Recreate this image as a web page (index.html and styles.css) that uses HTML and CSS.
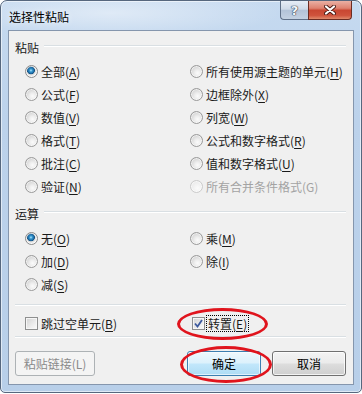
FILE: index.html
```html
<!DOCTYPE html>
<html lang="zh-CN">
<head>
<meta charset="utf-8">
<title>选择性粘贴</title>
<link rel="stylesheet" href="styles.css">
</head>
<body>
<div class="window">
  <div class="titlebar">
    <span class="title">选择性粘贴</span>
    <div class="caption-btns">
      <div class="cbtn help">?</div>
      <div class="cbtn close">
        <svg width="12" height="10" viewBox="0 0 12 10"><path d="M2 1.5 L10 8.5 M10 1.5 L2 8.5" stroke="#4a1a14" stroke-width="4" stroke-linecap="round"/><path d="M2 1.5 L10 8.5 M10 1.5 L2 8.5" stroke="#ffffff" stroke-width="2.2" stroke-linecap="round"/></svg>
      </div>
    </div>
  </div>
  <div class="client">
    <div class="group-head"><span>粘贴</span><span class="line"></span></div>
    <div class="opts six">
      <label class="opt"><span class="radio on"></span><span>全部(<u>A</u>)</span></label>
      <label class="opt"><span class="radio"></span><span>所有使用源主题的单元(<u>H</u>)</span></label>
      <label class="opt"><span class="radio"></span><span>公式(<u>F</u>)</span></label>
      <label class="opt"><span class="radio"></span><span>边框除外(<u>X</u>)</span></label>
      <label class="opt"><span class="radio"></span><span>数值(<u>V</u>)</span></label>
      <label class="opt"><span class="radio"></span><span>列宽(<u>W</u>)</span></label>
      <label class="opt"><span class="radio"></span><span>格式(<u>T</u>)</span></label>
      <label class="opt"><span class="radio"></span><span>公式和数字格式(<u>R</u>)</span></label>
      <label class="opt"><span class="radio"></span><span>批注(<u>C</u>)</span></label>
      <label class="opt"><span class="radio"></span><span>值和数字格式(<u>U</u>)</span></label>
      <label class="opt"><span class="radio"></span><span>验证(<u>N</u>)</span></label>
      <label class="opt disabled"><span class="radio"></span><span>所有合并条件格式(G)</span></label>
    </div>
    <div class="group-head second"><span>运算</span><span class="line"></span></div>
    <div class="opts three">
      <label class="opt"><span class="radio on"></span><span>无(<u>O</u>)</span></label>
      <label class="opt"><span class="radio"></span><span>乘(<u>M</u>)</span></label>
      <label class="opt"><span class="radio"></span><span>加(<u>D</u>)</span></label>
      <label class="opt"><span class="radio"></span><span>除(<u>I</u>)</span></label>
      <label class="opt"><span class="radio"></span><span>减(<u>S</u>)</span></label>
    </div>
    <div class="sep sep1"></div>
    <div class="opts checks">
      <label class="opt"><span class="check"></span><span>跳过空单元(<u>B</u>)</span></label>
      <label class="opt transpose"><span class="check checked"><svg width="9" height="9" viewBox="0 0 9 9"><path d="M1 4.5 L3.5 7.5 L8 1" fill="none" stroke="#3d5a9e" stroke-width="1.8"/></svg></span><span class="focus">转置(<u>E</u>)</span></label>
    </div>
    <div class="sep sep2"></div>
    <div class="buttons">
      <div class="btn disabled link">粘贴链接(L)</div>
      <div class="btn default ok">确定</div>
      <div class="btn cancel">取消</div>
    </div>
  </div>
  <div class="mark mark1"></div>
  <div class="mark mark2"></div>
</div>
</body>
</html>
```
FILE: styles.css
```css
html, body {
  margin: 0;
  background: #ffffff;
}
body {
  font-family: "Noto Sans CJK SC", "Noto Sans", sans-serif;
  font-size: 12px;
  color: #1a1a1a;
}
.window {
  position: relative;
  width: 362px;
  height: 393px;
  box-sizing: border-box;
  border: 1px solid #56677e;
  border-radius: 7px 7px 5px 5px;
  background: linear-gradient(180deg, #c6daf0 0%, #bcd2eb 30%, #b8cfe9 100%);
  box-shadow: inset 0 0 0 1px rgba(255,255,255,0.55);
  display: flex;
  flex-direction: column;
}
.titlebar {
  height: 29px;
  flex: none;
  display: flex;
  align-items: center;
  border-radius: 6px 6px 0 0;
  background: radial-gradient(ellipse 170px 26px at 110px 12px, rgba(255,255,255,0.45), rgba(255,255,255,0) 100%);
}
.title {
  padding-left: 8px;
  padding-top: 1px;
  color: #000;
  text-shadow: 0 0 6px rgba(255,255,255,0.9);
}
.caption-btns {
  margin-left: auto;
  margin-right: 9px;
  align-self: flex-start;
  display: flex;
}
.cbtn {
  height: 19px;
  box-sizing: border-box;
  display: flex;
  align-items: center;
  justify-content: center;
  border: 1px solid #5f7088;
  border-top: none;
}
.help {
  width: 28px;
  border-right: none;
  border-radius: 0 0 0 4px;
  background: linear-gradient(180deg, #e6edf6 0%, #cfdae8 45%, #b3c3d8 52%, #c3d1e2 100%);
  font-family: "DejaVu Sans", sans-serif;
  font-weight: bold;
  font-size: 13px;
  color: #f3f6fa;
  text-shadow: 0 0 1px #2d3a4e, 0 0 1px #2d3a4e, 0 0 1px #2d3a4e;
}
.close {
  width: 44px;
  border-color: #6b2c22;
  border-radius: 0 0 4px 0;
  background: linear-gradient(180deg, #eab0a4 0%, #de8270 40%, #c94732 52%, #cf533c 80%, #e08a6c 100%);
}
.client {
  flex: 1;
  margin: 0 7px 7px 7px;
  border: 1px solid #8596ad;
  background: #f0f0f0;
  padding: 5px 7px 0 6px;
  display: flex;
  flex-direction: column;
}
.group-head {
  height: 22px;
  display: flex;
  align-items: center;
  color: #1a1a1a;
}
.group-head .line {
  flex: 1;
  margin-left: 5px;
  margin-top: -3px;
  border-top: 1px solid #d9dfe3;
  border-bottom: 1px solid #ffffff;
}
.group-head.second {
  margin-top: 4px;
}
.opts {
  display: grid;
  grid-template-columns: 165px 1fr;
  grid-auto-rows: 23px;
  padding-left: 10px;
}
.opts.six { margin-top: 2px; }
.opts.three { margin-top: 3px; }
.opt {
  display: flex;
  align-items: center;
  gap: 3px;
  white-space: nowrap;
  line-height: 23px;
}
.opt u {
  text-decoration: underline;
  text-underline-offset: 2px;
}
.opt.disabled {
  color: #a3a3a3;
}
.radio {
  width: 13px;
  height: 13px;
  box-sizing: border-box;
  flex: none;
  border-radius: 50%;
  border: 1px solid #9a9a9a;
  background: radial-gradient(circle at 60% 65%, #fbfbfb 0, #eeeeee 30%, #d2d2d2 75%, #c4c4c4 100%);
  box-shadow: inset 0 0 0 1px rgba(255,255,255,0.6);
}
.radio.on {
  border-color: #8a8a8a;
  background: radial-gradient(circle at 45% 40%, #b4ecff 0, #3a9ad2 1.4px, #1a6aa3 3px, #124e7e 3.6px, #d8d8d8 4.2px, #f4f4f4 6px);
}
.opt.disabled .radio {
  border-color: #cbcbcb;
  background: radial-gradient(circle at 60% 65%, #fbfbfb 0, #f2f2f2 40%, #e3e3e3 100%);
}
.sep {
  border-top: 1px solid #d9dfe3;
  border-bottom: 1px solid #ffffff;
}
.sep1 { margin-top: 8px; }
.opts.checks { margin-top: 6px; }
.check {
  width: 13px;
  height: 13px;
  box-sizing: border-box;
  flex: none;
  border: 1px solid #8e8f8f;
  background: linear-gradient(135deg, #d2d2d2 0%, #ececec 60%, #fbfbfb 100%);
  box-shadow: inset 0 0 0 1px #f6f6f6;
  display: flex;
  align-items: center;
  justify-content: center;
}
.transpose {
  margin-left: 2px;
  gap: 0;
}
.focus {
  margin-left: 1px;
  border: 1px dotted #000;
  line-height: 15px;
  padding: 0 1px 0 1px;
}
.sep2 { margin-top: 1px; }
.buttons {
  margin-top: 13px;
  display: flex;
  gap: 11px;
}
.btn {
  height: 25px;
  box-sizing: border-box;
  border: 1px solid #707070;
  border-radius: 3px;
  background: linear-gradient(180deg, #f3f3f3 0%, #ebebeb 48%, #dddddd 52%, #cfcfcf 100%);
  box-shadow: inset 0 0 0 1px rgba(255,255,255,0.75);
  display: flex;
  align-items: center;
  justify-content: center;
  color: #000;
  width: 74px;
}
.btn.link {
  width: 80px;
  margin-right: auto;
  border-color: #adb2b5;
  background: #f4f4f4;
  color: #8a8a8a;
  box-shadow: none;
}
.btn.default {
  border-color: #3c7fb1;
  background: linear-gradient(180deg, #eef8fd 0%, #dcf1fc 48%, #c2e7fb 52%, #aedcf4 100%);
  box-shadow: inset 0 0 0 1px rgba(255,255,255,0.6);
}
.mark {
  position: absolute;
  border: 3px solid #e0141d;
  border-radius: 50%;
  box-sizing: border-box;
}
.mark1 {
  left: 176px;
  top: 307px;
  width: 91px;
  height: 32px;
}
.mark2 {
  left: 179px;
  top: 345px;
  width: 92px;
  height: 37px;
}
```
